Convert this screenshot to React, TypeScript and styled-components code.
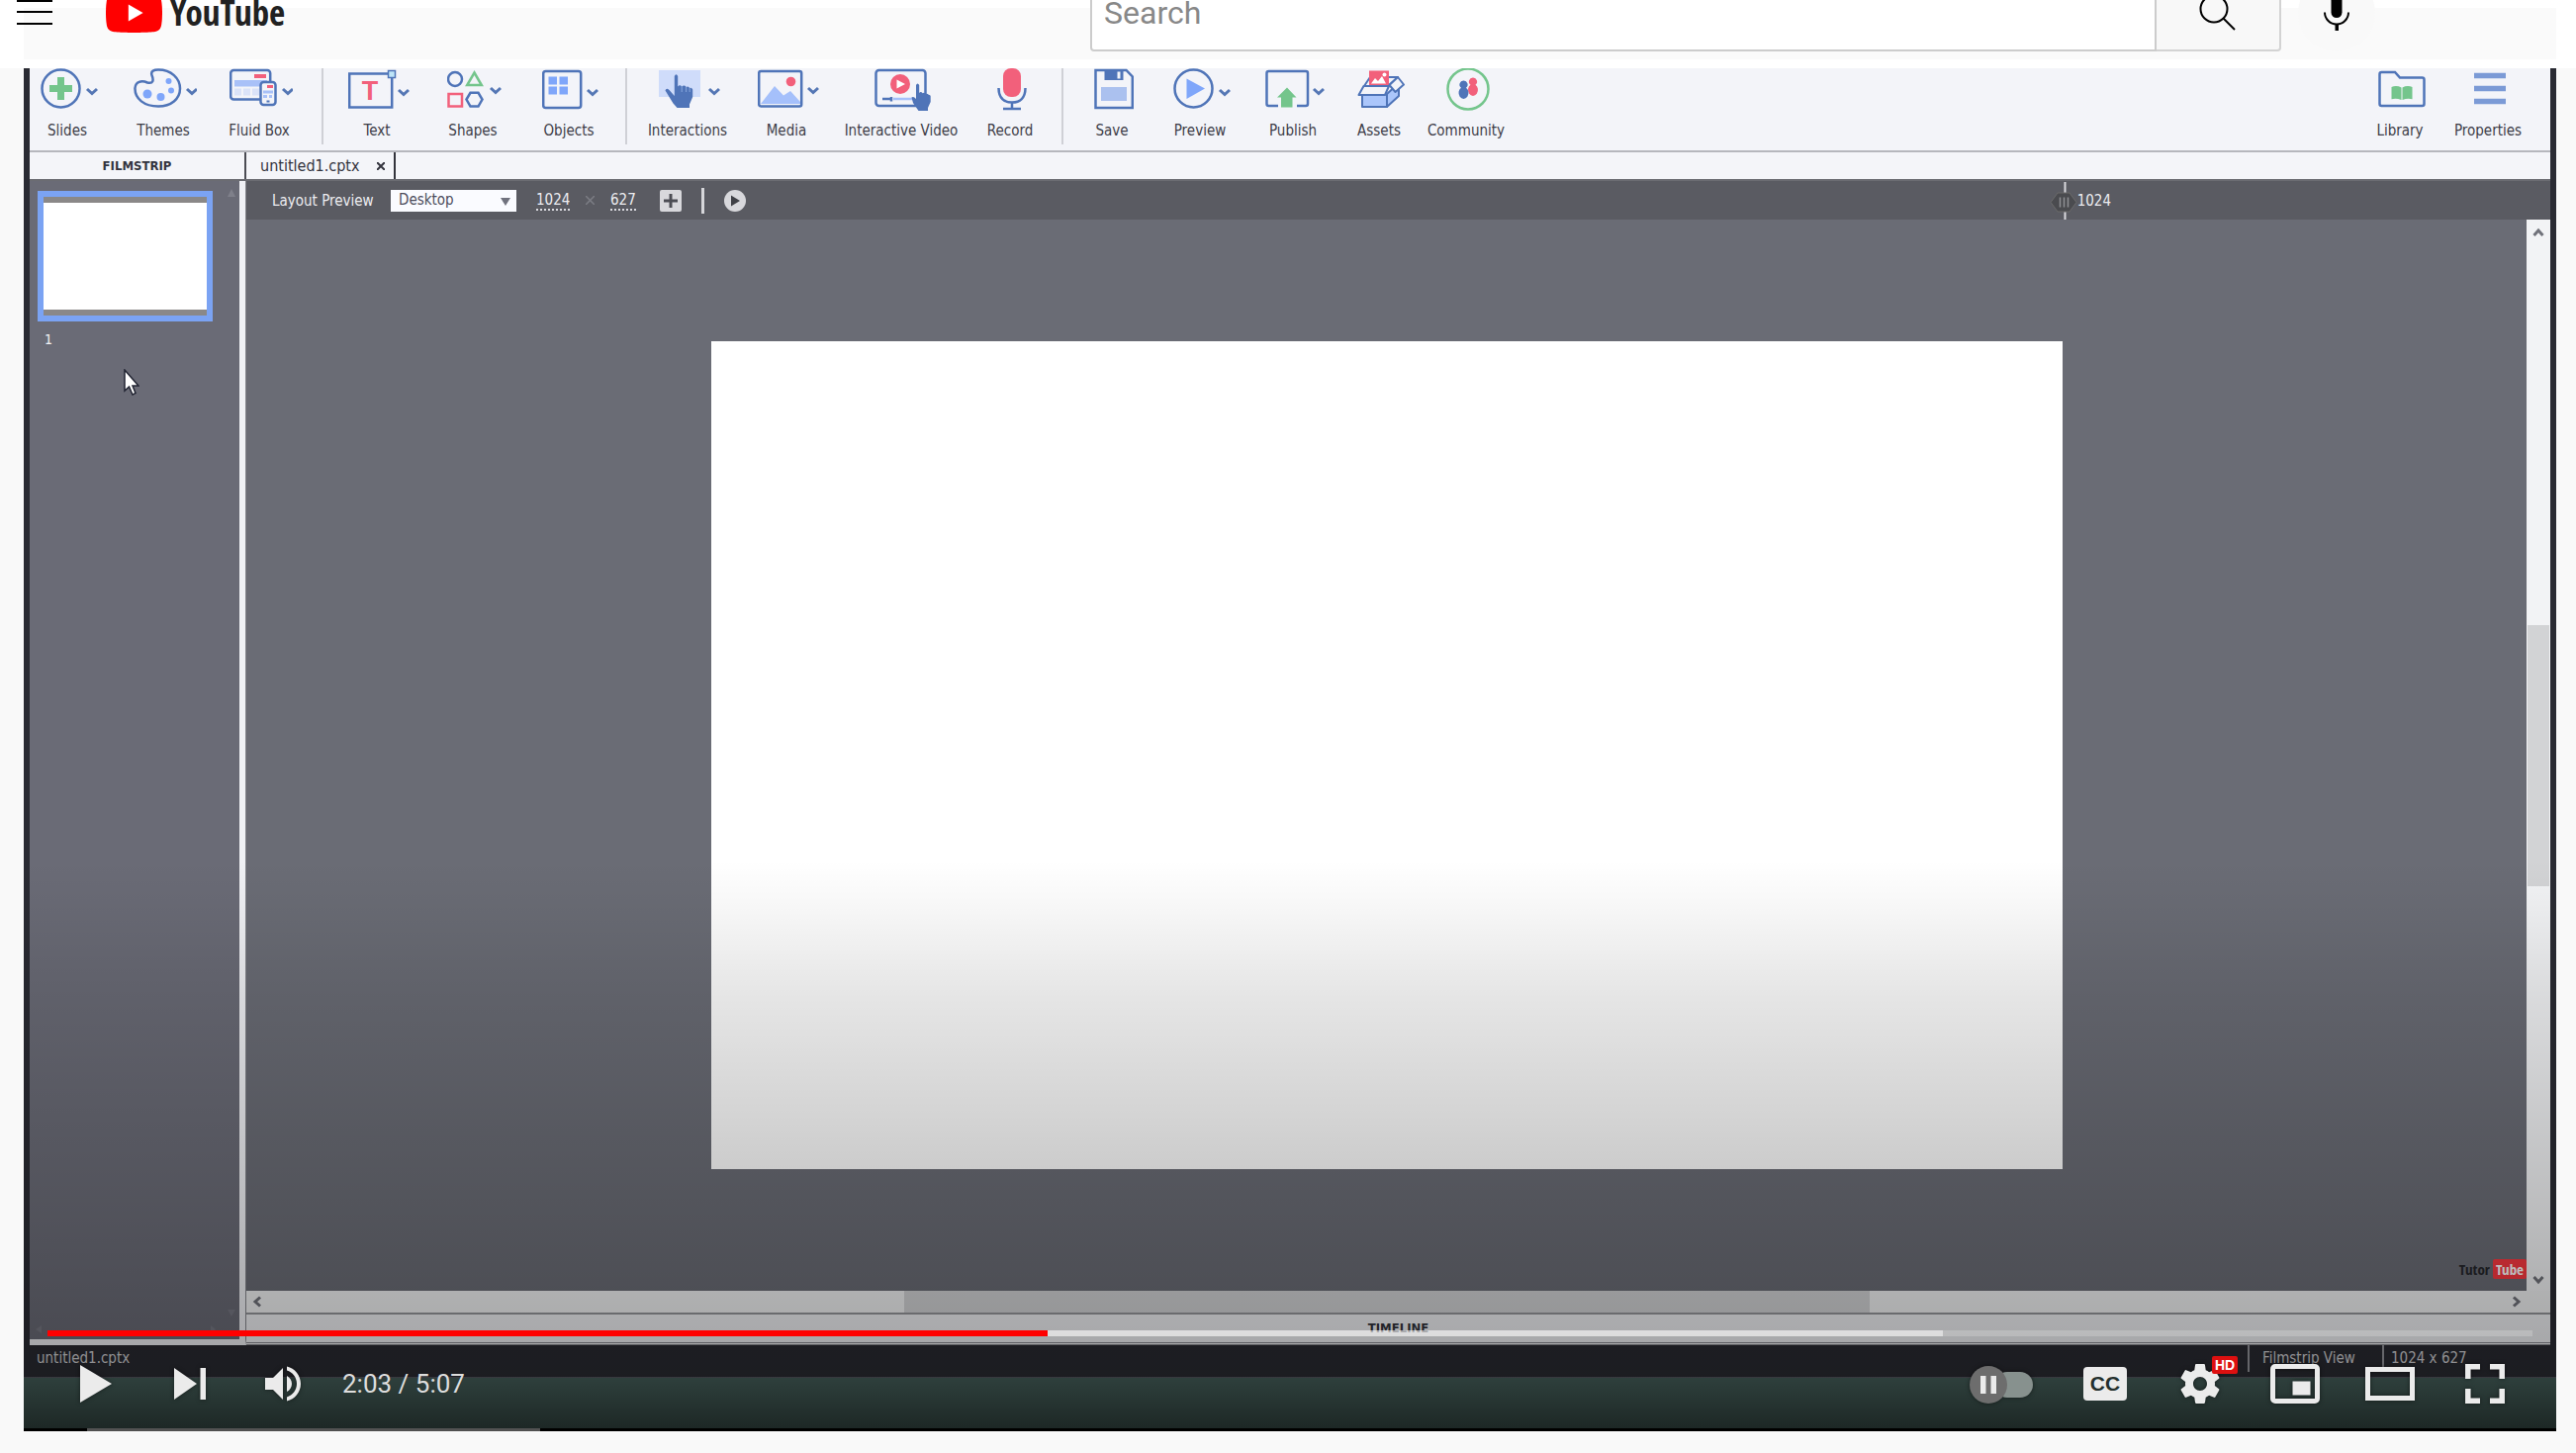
import React from "react";
import styled, { createGlobalStyle } from "styled-components";

const uiFont = `"DejaVu Sans Condensed", "Noto Sans", sans-serif`;
const narrowFont = `"Noto Sans ExtraCondensed", "Open Sans Condensed", "Roboto Condensed", "Liberation Sans Narrow", "Liberation Sans", sans-serif`;
const blue = "#4f74b8";
const sky = "#7fa6fa";
const pink = "#f2607b";
const green = "#74c58c";

const GlobalStyle = createGlobalStyle`
  *, *::before, *::after { box-sizing: border-box; }
  body { margin: 0; background: #f9f9f9; }
  button, input, select { font: inherit; color: inherit; margin: 0; padding: 0; border: 0; background: none; border-radius: 0; }
  svg { display: block; flex: none; }
`;

const Page = styled.div`
  display: flex;
  flex-direction: column;
  min-height: 100vh;
  font-family: Roboto, sans-serif;
`;

/* ---------- site header ---------- */
const Header = styled.header`
  height: 69px;
  overflow: hidden;
  display: flex;
  align-items: flex-end;
  background: linear-gradient(#fafafa, #fafafa) 24px 8px / calc(100% - 44px) 52px no-repeat, #fff;
`;
const HeaderRow = styled.div`
  flex: 1;
  height: 112px;
  display: flex;
  align-items: center;
`;
const HeaderSide = styled.div`
  flex: 1;
  display: flex;
  align-items: center;
  gap: 54px;
  padding-left: 17px;
`;
const PlainButton = styled.button`
  display: block;
  cursor: pointer;
`;
const LogoLink = styled.a`
  display: flex;
  align-items: center;
  gap: 8px;
  color: #212121;
  text-decoration: none;
  font: 700 35px/26px ${narrowFont};
`;
const SearchForm = styled.form`
  flex: none;
  display: flex;
  width: 1204px;
  height: 78px;
  color: #111;
`;
const SearchInput = styled.input`
  flex: 1;
  padding: 0 12px;
  border: 2px solid #ccc;
  border-radius: 4px 0 0 4px;
  background: #fff;
  font-size: 32px;
  &::placeholder { color: #888; opacity: 1; }
`;
const SearchButton = styled.button`
  width: 126px;
  display: grid;
  place-items: center;
  border: 2px solid #d3d3d3;
  border-left: 0;
  border-radius: 0 4px 4px 0;
  background: #f8f8f8;
`;
const MicArea = styled.div`
  width: 298px;
  padding-left: 17px;
`;
const MicButton = styled.button`
  width: 78px;
  height: 78px;
  border-radius: 50%;
  display: grid;
  place-items: center;
  background: #f9f9f9;
`;

/* ---------- video frame ---------- */
const Video = styled.main`
  position: relative;
  flex: 1;
  margin: 0 20px 22px 24px;
  display: flex;
  flex-direction: column;
  background: #2a2b33;
  font: 15px/20px ${uiFont};
`;
const AppWindow = styled.div`
  flex: 1;
  margin: 0 6px;
  display: flex;
  flex-direction: column;
  background: #f3f4f8;
`;
const Toolbar = styled.div`
  height: 85px;
  display: flex;
  background: #f3f4f9;
  border-bottom: 2px solid #b6b7bd;
  color: #3d3d48;
`;
const ToolGroup = styled.div<{ $left: number; $right: number; $line?: boolean }>`
  position: relative;
  height: 77px;
  display: flex;
  gap: 21px;
  padding: 0 ${(p) => p.$right}px 0 ${(p) => p.$left}px;
  border-right: ${(p) => (p.$line ? "2px solid #cfd0d6" : "0")};
`;
const EndGroup = styled(ToolGroup)`
  margin-left: auto;
`;
const Tool = styled.button<{ $w: number }>`
  width: ${(p) => p.$w}px;
  display: flex;
  flex-direction: column;
  align-items: center;
  gap: 9px;
  white-space: nowrap;
  svg { margin-left: 3px; }
`;

const TabRow = styled.div`
  height: 29px;
  display: flex;
  background: #f4f5f9;
  border-bottom: 2px solid #6b6c72;
  color: #33343e;
`;
const PanelTitle = styled.h2`
  width: 219px;
  margin: 0;
  border-right: 2px solid #4b4c54;
  text-align: center;
  font: 700 13px/27px ${uiFont};
`;
const FileTab = styled.div`
  width: 151px;
  display: flex;
  align-items: center;
  justify-content: space-between;
  padding: 0 9px 0 14px;
  border-right: 2px solid #33343c;
  font-size: 16px;
`;

const Body = styled.div`
  flex: 1;
  display: flex;
`;
const FilmColumn = styled.aside`
  width: 219px;
  display: flex;
  border-right: 1px solid #85868c;
  border-bottom: 6px solid #f0f1f5;
`;
const Film = styled.div`
  position: relative;
  flex: 1;
  padding: 10px 8px;
  background: #6a6b76;
  border-right: 6px solid #f0f1f5;
  color: #f2f2f5;
  font-size: 14px;
`;
const FilmHints = styled.svg`
  position: absolute;
  right: 4px;
  bottom: 2px;
`;
const FilmTopHint = styled.svg`
  position: absolute;
  right: 4px;
  top: 8px;
`;
const Thumb = styled.button`
  display: block;
  width: 177px;
  height: 132px;
  border: 6px solid #7ba3f3;
  background: linear-gradient(#8a8888 0 6px, #fff 6px 114px, #8a8888 114px);
`;
const ThumbLabel = styled.div`
  padding: 8px 7px;
`;
const Pointer = styled.svg`
  position: absolute;
  left: 95px;
  top: 190px;
`;

const Main = styled.section`
  flex: 1;
  min-width: 0;
  display: flex;
  flex-direction: column;
`;
const LayoutBar = styled.div`
  height: 39px;
  display: flex;
  align-items: center;
  gap: 20px;
  padding-left: 26px;
  background: #5a5b62;
  color: #ececf0;
`;
const SelectLabel = styled.label`
  width: 100px;
  white-space: nowrap;
`;
const SelectBox = styled.div`
  position: relative;
  width: 127px;
  height: 22px;
  svg { position: absolute; right: 6px; top: 8px; pointer-events: none; }
`;
const Select = styled.select`
  appearance: none;
  display: block;
  width: 100%;
  height: 22px;
  padding: 0 8px 2px;
  background: #fafbff;
  color: #4c4d5c;
  line-height: 20px;
`;
const Dims = styled.div`
  display: flex;
  align-items: center;
  gap: 16px;
  padding-right: 4px;
  color: #85868c;
`;
const DimInput = styled.input<{ $w: number }>`
  width: ${(p) => p.$w}px;
  height: 20px;
  color: #ececf0;
  border-bottom: 2px dotted #d9d9de;
`;
const BarLine = styled.span`
  width: 3px;
  height: 26px;
  background: #d6d6da;
`;
const RulerMark = styled.div`
  margin-left: auto;
  margin-right: 444px;
  display: flex;
  align-items: center;
`;

const StageRow = styled.div`
  flex: 1;
  display: flex;
`;
const Stage = styled.div`
  position: relative;
  flex: 1;
  display: grid;
  place-items: center;
  background: #6a6c75;
`;
const Slide = styled.div`
  width: 1366px;
  max-width: 80%;
  aspect-ratio: 1024 / 627;
  background: #fff;
`;
const Watermark = styled.div`
  position: absolute;
  right: 0;
  bottom: 12px;
  display: flex;
  gap: 3px;
  color: #24252a;
  font: 700 15px/20px ${narrowFont};
  b { padding: 0 3px; border-radius: 2px; background: #f83840; color: #fff; }
`;
const VScroll = styled.div`
  width: 24px;
  display: flex;
  flex-direction: column;
  align-items: center;
  padding: 6px 1px 4px;
  background: #f2f3f5;
`;
const HScroll = styled.div`
  height: 24px;
  display: flex;
  align-items: center;
  padding: 0 27px 0 4px;
  background: #f1f2f3;
  border-bottom: 2px solid #94959a;
`;
const Space = styled.span<{ $grow: number }>`
  flex: ${(p) => p.$grow} 1 0;
`;
const Grip = styled(Space)`
  align-self: stretch;
  background: #d2d3d5;
`;
const Timeline = styled.h2`
  height: 31px;
  margin: 0;
  background: #f0f1f4;
  border-bottom: 3px double #85868c;
  text-align: center;
  color: #30313a;
  font: 700 13px/28px ${uiFont};
`;

const Status = styled.footer`
  height: 32px;
  display: flex;
  padding-left: 7px;
  background: #292a31;
  color: #cfcfd3;
  line-height: 26px;
`;
const StatusCell = styled.span<{ $w: number; $pad: number }>`
  width: ${(p) => p.$w}px;
  height: 27px;
  padding-left: ${(p) => p.$pad}px;
  border-left: 2px solid #94959b;
  white-space: nowrap;
`;
const StatusName = styled.span`
  flex: 1;
`;
const Desk = styled.div`
  height: 55px;
  background: #46605b;
  border-top: 1px solid #55555e;
  display: flex;
  align-items: flex-end;
`;
const DeskEdge = styled.div`
  flex: 1;
  height: 3px;
  padding-left: 64px;
  background: #000;
  span { display: block; width: 458px; height: 3px; background: #c9c9c9; }
`;

/* ---------- player chrome ---------- */
const Shade = styled.div`
  position: absolute;
  inset: auto 0 0;
  height: 577px;
  pointer-events: none;
  background: linear-gradient(transparent, rgba(0, 0, 0, 0.03) 8%, rgba(0, 0, 0, 0.1) 24%, rgba(0, 0, 0, 0.2) 54%, rgba(0, 0, 0, 0.27) 75%, rgba(0, 0, 0, 0.32) 90%, rgba(0, 0, 0, 0.6) 100%);
`;
const Chrome = styled.div`
  position: absolute;
  inset: auto 24px 0;
  color: #ebebeb;
`;
const Track = styled.div`
  height: 6px;
  background: rgba(255, 255, 255, 0.2);
`;
const Loaded = styled.div`
  height: 6px;
  background: rgba(255, 255, 255, 0.5);
`;
const Played = styled.div`
  height: 6px;
  background: #f00;
`;
const Controls = styled.div`
  height: 96px;
  display: flex;
  align-items: center;
`;
const Control = styled.button`
  position: relative;
  width: 96px;
  height: 96px;
  display: grid;
  place-items: center;
  svg { filter: drop-shadow(0 0 2px rgba(0, 0, 0, 0.5)); }
`;
const Time = styled.div`
  flex: 1;
  padding-left: 10px;
  color: #ddd;
  font: 26px/32px Roboto, sans-serif;
`;
const Captions = styled.span`
  width: 44px;
  height: 34px;
  border-radius: 4px;
  background: #ebebeb;
  color: #24302e;
  font: 700 21px/34px "Liberation Sans", sans-serif;
`;
const Hd = styled.span`
  position: absolute;
  left: 60px;
  top: 20px;
  width: 26px;
  height: 18px;
  border-radius: 2px;
  background: #dd1010;
  color: #fff;
  font: 700 14px/18px "Liberation Sans", sans-serif;
`;

/* ---------- icons ---------- */
const Chev = ({ x, y = 21 }: { x: number; y?: number }) => (
  <path d={`M${x} ${y}l5 4.500l5-4.500`} stroke="#5577b5" strokeWidth="3" />
);
const Ico = ({ w, children }: { w: number; children: React.ReactNode }) => (
  <svg width={w} height="44" viewBox={`0 0 ${w} 44`} fill="none" stroke={blue} strokeWidth="2.5" aria-hidden="true">
    {children}
  </svg>
);
const Arrow = ({ d }: { d: string }) => (
  <svg width="14" height="14" viewBox="0 0 14 14" fill="none" stroke="#70727a" strokeWidth="3"><path d={d} /></svg>
);

const icons: Record<string, React.ReactNode> = {
  Slides: <Ico w={58}><circle cx="20.5" cy="20.5" r="19" /><path d="M20.500 9v23M9 20.500h23" stroke={green} strokeWidth="7" /><Chev x={47} /></Ico>,
  Themes: <Ico w={64}><path d="M1.500 20C2 13.500 8 12 14 14.500C20 16 20.500 12 18.500 7C17 2.500 21 1.500 25 1.500C38 1.500 47 10 47 20.500C47 31 38 38.500 25 38.500C11 38.500 1 31 1.500 20Z" /><g fill={sky} stroke="none"><circle cx="14" cy="26" r="4.500" /><circle cx="27.500" cy="29" r="4" /><circle cx="38" cy="22.500" r="3" /><circle cx="35.500" cy="13" r="3" /></g><Chev x={54} /></Ico>,
  "Fluid Box": <Ico w={64}><rect x="1.200" y="2" width="40" height="29.500" rx="3" /><g stroke="none"><rect x="25" y="6" width="12" height="4" fill={pink} /><rect x="5" y="12" width="33" height="6.500" fill="#a9c1f8" /><path d="M5 20.500h7v7H5zM14 20.500h7v7h-7zM23 20.500h7v7h-7z" fill="#dbe3f8" /></g><rect x="31.500" y="14" width="15" height="23" rx="3" fill="#f3f4f9" /><path d="M38 18.500h6" stroke={pink} strokeWidth="3" /><path d="M34 24h10M34 28.500h4M40 28.500h3" stroke="#a9c1f8" strokeWidth="3" /><path d="M37.500 33.500h3" strokeWidth="2" /><Chev x={54} /></Ico>,
  Text: <Ico w={56}><rect x="-1.800" y="5.500" width="0" height="0" stroke="none" /><rect x="1.200" y="5.500" width="43" height="34" /><rect x="40.500" y="2.500" width="7" height="7" fill="#bfe6f8" strokeWidth="1.500" /><text x="22" y="32" textAnchor="middle" fontFamily="Liberation Sans" fontWeight="700" fontSize="27" fill={pink} stroke="none">T</text></Ico>,
  Shapes: <Ico w={55}><circle cx="8" cy="11" r="7" /><path d="M27.500 4.500L34.800 17H20.200Z" stroke={green} /><rect x="1.500" y="26" width="13.500" height="12.500" stroke={pink} /><path d="M19.500 31.500L23.500 24.800H31.500L35.500 31.500L31.500 38.500H23.500Z" /><Chev x={44} y={20} /></Ico>,
  Objects: <Ico w={57}><rect x="1.200" y="3" width="38" height="37" rx="2.500" /><path d="M6.500 8.500h8.500v8h-8.500zM17.500 8.500h8.500v8h-8.500zM6.500 18.500h8.500v8h-8.500zM17.500 18.500h8.500v8h-8.500z" fill={sky} stroke="none" /><Chev x={46} y={22} /></Ico>,
  Interactions: <Ico w={62}><path d="M0 2h42v27H0z" fill="#cfdcfa" stroke="none" /><path d="M15.800 8q1.700-3.500 3.400 0V18.500q2-2.500 4 0q2.500-2 4.500 .5q2-1.500 3.500 1q2-1 3 1.500V29L31 36.500V40H18.500L14.500 35.500L6.500 22.500q1-3 4-.5l5.300 6Z" fill={blue} stroke="none" /><path d="M23.200 18v6M27.600 19v5M31.200 20v4" stroke="#86a5dc" strokeWidth="1" /><Chev x={51} /></Ico>,
  Media: <Ico w={62}><path d="M3 36L17 18L26 27.500L33 23L43 34V36Z" fill="#a5c0fb" stroke="none" /><rect x="1.200" y="3" width="43" height="35.500" rx="2" /><circle cx="33.500" cy="13.500" r="4.800" fill={pink} stroke="none" /><Chev x={51} y={20} /></Ico>,
  "Interactive Video": <Ico w={57}><rect x="1.500" y="2" width="50" height="36" rx="3" /><circle cx="26" cy="16" r="10" fill={pink} stroke="none" /><path d="M22.500 11.500L31 16L22.500 20.500Z" fill="#fff" stroke="none" /><path d="M8 31h10M17 29v4.500" /><path d="M19 31h21" stroke="#a5c0fb" /><path d="M42 17q1.500-3 3.200 0V25q1.500-2 3.500 .3q1.500-1.300 3 .7q2-.5 3 .8q2 0 2 1.500V34L54 40V43H44.500L39 35L37.500 29.500q2-1.500 4.500 1.500Z" fill={blue} stroke="none" /></Ico>,
  Record: <Ico w={30}><rect x="6" y="0" width="18" height="29" rx="8" fill={pink} stroke="none" /><path d="M1.500 20C1.500 30 7 34.500 15 34.500S28.500 30 28.500 20M15 34.500V41M6 41h18" /></Ico>,
  Save: <Ico w={40}><path d="M1.500 2H32.500L38.800 8.500V40H1.500Z" /><path d="M10.500 2h19v10h-19z" fill={blue} stroke="none" /><path d="M23.500 3.500h3v7h-3z" fill="#f3f4f9" stroke="none" /><path d="M7 19h26v14H7z" fill="#abc1ef" stroke="none" /></Ico>,
  Preview: <Ico w={58}><circle cx="20.500" cy="20.500" r="19" /><path d="M13.500 10.500L32 20.500L13.500 31Z" fill={sky} stroke="none" /><Chev x={47} y={22} /></Ico>,
  Publish: <Ico w={60}><path d="M13 38H3.500Q1.500 38 1.500 36V5Q1.500 3 3.500 3H41Q43 3 43 5V36Q43 38 41 38H32" /><path d="M22 19.500L31.500 29.500H27.500V39.500H16V29.500H12Z" fill={green} stroke="none" /><Chev x={49} /></Ico>,
  Assets: <Ico w={48}><g strokeWidth="2" strokeLinejoin="round"><path d="M7 18L13 9H41L31 18" /><path d="M5 26V39H30V26" fill="#abc6fb" /><path d="M30 39L42 28V15L30 26Z" fill="#abc6fb" /><path d="M12 2.500H32V17H12Z" fill={pink} stroke="none" /><path d="M14 15.500L18 10L21 13L25 8L29 15.500Z" fill="#fff" stroke="none" /><circle cx="27.500" cy="6.500" r="2" fill="#fff" stroke="none" /><path d="M6.500 18H32L28 27H1.500Z" fill="#f3f4f9" /><path d="M41 9L47 16.500L38.500 24L32.500 17Z" fill="#f3f4f9" /></g></Ico>,
  Community: <Ico w={44}><circle cx="22" cy="21" r="20.500" stroke={green} /><g stroke="none"><path d="M27 9.500a4 4 0 0 1 2.500 7.200a5 6 0 1 1-5 0A4 4 0 0 1 27 9.500Z" fill={pink} /><path d="M17.500 12.500a4 4 0 0 1 2.500 7.200a5 6 0 1 1-5 0A4 4 0 0 1 17.500 12.500Z" fill={blue} /></g></Ico>,
  Library: <Ico w={48}><path d="M1.500 6Q1.500 4 3.500 4H17L22 9.500H44.500Q46.500 9.500 46.500 11.500V36Q46.500 38 44.500 38H3.500Q1.500 38 1.500 36Z" /><path d="M13.500 19q5-2 10 .5V32q-5-2-10-.8ZM24.500 19.500q5-2.500 10-.5V31.200q-5-1.200-10 .8Z" fill={green} stroke="none" /></Ico>,
  Properties: <Ico w={32}><path d="M0 7.500h32M0 20.500h32M0 33.500h32" stroke="#7b9ad6" strokeWidth="5.500" /></Ico>,
};
icons.Text = (
  <Ico w={62}>
    <rect x="1.200" y="5.500" width="43" height="34" />
    <rect x="40.500" y="2.500" width="7" height="7" fill="#bfe6f8" strokeWidth="1.500" />
    <text x="22" y="32" textAnchor="middle" fontFamily="Liberation Sans" fontWeight="700" fontSize="27" fill={pink} stroke="none">T</text>
    <Chev x={51} y={22} />
  </Ico>
);

const groups: { left: number; right: number; tools: [string, number][] }[] = [
  { left: 0, right: 25, tools: [["Slides", 76], ["Themes", 76], ["Fluid Box", 76]] },
  { left: 16, right: 19, tools: [["Text", 76], ["Shapes", 76], ["Objects", 76]] },
  { left: 21, right: 19, tools: [["Interactions", 80], ["Media", 78], ["Interactive Video", 112], ["Record", 66]] },
  { left: 15, right: 0, tools: [["Save", 68], ["Preview", 68], ["Publish", 78], ["Assets", 54], ["Community", 80]] },
];

const ToolButton = ({ name, w }: { name: string; w: number }) => (
  <Tool type="button" $w={w}>{icons[name]}<span>{name}</span></Tool>
);

const current = 123;
const duration = 307;

export default function App() {
  const loadedPct = 76.27;
  const playedPct = (1011 / 1916) * 100;
  const clock = (s: number) => `${Math.floor(s / 60)}:${String(s % 60).padStart(2, "0")}`;
  return (
    <Page>
      <GlobalStyle />
      <Header>
        <HeaderRow>
          <HeaderSide>
            <PlainButton type="button" aria-label="Guide">
              <svg width="36" height="28" viewBox="0 0 36 28" stroke="#000" strokeWidth="2"><path d="M0 2h36M0 13h36M0 25h36" /></svg>
            </PlainButton>
            <LogoLink href="#">
              <svg width="57" height="40" viewBox="0 0 57 40"><path d="M55.800 6.200A7.200 7.200 0 0 0 50.800 1.200C46.300 0 28.500 0 28.500 0S10.700 0 6.200 1.200A7.200 7.200 0 0 0 1.200 6.200C0 10.700 0 20 0 20s0 9.300 1.200 13.800a7.200 7.200 0 0 0 5 5C10.700 40 28.500 40 28.500 40s17.800 0 22.300-1.200a7.200 7.200 0 0 0 5-5C57 29.300 57 20 57 20s0-9.300-1.200-13.800Z" fill="#f00" /><path d="M22.800 28.500L37.600 20L22.800 11.500Z" fill="#fff" /></svg>
              YouTube
            </LogoLink>
          </HeaderSide>
          <SearchForm onSubmit={(e) => e.preventDefault()}>
            <SearchInput type="text" placeholder="Search" aria-label="Search" />
            <SearchButton type="submit" aria-label="Submit search">
              <svg width="40" height="40" viewBox="0 0 40 40" fill="none" stroke="#000" strokeWidth="2"><circle cx="16" cy="16" r="13.500" /><path d="M25.500 25.500L37 37" /></svg>
            </SearchButton>
          </SearchForm>
          <MicArea>
            <MicButton type="button" aria-label="Search with your voice">
              <svg width="28" height="36" viewBox="0 0 28 36"><rect x="8.500" y="0" width="11" height="23" rx="5.500" /><path d="M2 17.500a12 12 0 0 0 24 0" fill="none" stroke="#000" strokeWidth="2" /><path d="M12.500 29h3.500v7h-3.500z" /></svg>
            </MicButton>
          </MicArea>
        </HeaderRow>
      </Header>

      <Video>
        <AppWindow>
          <Toolbar>
            {groups.map((g, i) => (
              <ToolGroup key={i} $left={g.left} $right={g.right} $line={i < 3}>
                {g.tools.map(([name, w]) => <ToolButton key={name} name={name} w={w} />)}
              </ToolGroup>
            ))}
            <EndGroup $left={0} $right={29}>
              <ToolButton name="Library" w={68} />
              <ToolButton name="Properties" w={68} />
            </EndGroup>
          </Toolbar>
          <TabRow>
            <PanelTitle>FILMSTRIP</PanelTitle>
            <FileTab>
              untitled1.cptx
              <PlainButton type="button" aria-label="Close tab">
                <svg width="8" height="8" viewBox="0 0 8 8" stroke="#33343e" strokeWidth="2"><path d="M0 0l8 8M8 0l-8 8" /></svg>
              </PlainButton>
            </FileTab>
          </TabRow>
          <Body>
            <FilmColumn>
              <Film>
                <Thumb type="button" aria-label="Slide 1" />
                <ThumbLabel>1</ThumbLabel>
                <FilmTopHint width="8" height="8" viewBox="0 0 8 8" fill="#7f808a"><path d="M4 0L8 8H0Z" /></FilmTopHint>
                <FilmHints width="202" height="28" viewBox="0 0 202 28" fill="#777883"><path d="M194 0h8l-4 7ZM6 16v8L0 20ZM177 16v8l5-4Z" /></FilmHints>
                <Pointer width="16" height="28" viewBox="0 0 16 28"><path d="M1 1V22L5.500 18L9 26L12 24.500L9 17H15Z" fill="#fff" stroke="#222533" strokeWidth="1.500" /></Pointer>
              </Film>
            </FilmColumn>
            <Main>
              <LayoutBar>
                <SelectLabel htmlFor="layout">Layout Preview</SelectLabel>
                <SelectBox>
                  <Select id="layout" defaultValue="Desktop"><option>Desktop</option></Select>
                  <svg width="10" height="8" viewBox="0 0 10 8" fill="#70727e"><path d="M0 0h10L5 8Z" /></svg>
                </SelectBox>
                <Dims>
                  <DimInput $w={34} aria-label="Width" defaultValue="1024" />
                  <svg width="9" height="9" viewBox="0 0 9 9" stroke="#7c7d84" strokeWidth="1.500"><path d="M0 0l9 9M9 0l-9 9" /></svg>
                  <DimInput $w={26} aria-label="Height" defaultValue="627" />
                </Dims>
                <PlainButton type="button" aria-label="Add">
                  <svg width="22" height="22" viewBox="0 0 22 22"><rect width="22" height="22" rx="2" fill="#d8d8dc" /><path d="M11 4v14M4 11h14" stroke="#4c4d54" strokeWidth="3" /></svg>
                </PlainButton>
                <BarLine />
                <PlainButton type="button" aria-label="Play preview">
                  <svg width="22" height="22" viewBox="0 0 22 22"><circle cx="11" cy="11" r="11" fill="#d8d8dc" /><path d="M7 5.500L16 11L7 16.500Z" fill="#3f4046" /></svg>
                </PlainButton>
                <RulerMark>
                  <svg width="28" height="39" viewBox="0 0 28 39"><path d="M15.500 1v38" stroke="#dadade" strokeWidth="2" /><path d="M1 21.500L8 12H20L27 21.500L20 31H8Z" fill="#4a4b4f" stroke="#6b6b6b" /><path d="M10.500 16.500v10M14.500 16.500v10M18.500 16.500v10" stroke="#8f9094" strokeWidth="1.500" /></svg>
                  <span>1024</span>
                </RulerMark>
              </LayoutBar>
              <StageRow>
                <Stage>
                  <Slide />
                  <Watermark>Tutor <b>Tube</b></Watermark>
                </Stage>
                <VScroll>
                  <Arrow d="M2.500 10L7 5L11.500 10" />
                  <Space $grow={390} /><Grip $grow={263} /><Space $grow={391} />
                  <Arrow d="M2.500 4L7 9L11.500 4" />
                </VScroll>
              </StageRow>
              <HScroll>
                <Arrow d="M10 2.500L5 7L10 11.500" />
                <Space $grow={646} /><Grip $grow={976} /><Space $grow={646} />
                <Arrow d="M4 2.500L9 7L4 11.500" />
              </HScroll>
              <Timeline>TIMELINE</Timeline>
            </Main>
          </Body>
          <Status>
            <StatusName>untitled1.cptx</StatusName>
            <StatusCell $w={136} $pad={13}>Filmstrip View</StatusCell>
            <StatusCell $w={170} $pad={7}>1024 x 627</StatusCell>
          </Status>
        </AppWindow>
        <Desk><DeskEdge><span /></DeskEdge></Desk>

        <Shade />
        <Chrome>
          <Track>
            <Loaded style={{ width: `${loadedPct}%` }}>
              <Played style={{ width: `${playedPct}%` }} />
            </Loaded>
          </Track>
          <Controls>
            <Control type="button" aria-label="Play"><svg width="96" height="96" fill="#ebebeb"><path d="M33 29L65 48L33 67Z" /></svg></Control>
            <Control type="button" aria-label="Next"><svg width="96" height="96" fill="#ebebeb"><path d="M32 32L55 48L32 64ZM58.500 32H64V64H58.500Z" /></svg></Control>
            <Control type="button" aria-label="Mute"><svg width="96" height="96" fill="#ebebeb"><path transform="translate(12 12) scale(2)" d="M8,21 L12,21 L17,26 L17,10 L12,15 L8,15 Z M19,14 L19,22 C20.480,21.320 21.500,19.770 21.500,18 C21.500,16.260 20.480,14.740 19,14 Z M19,11.290 C21.890,12.150 24,14.830 24,18 C24,21.170 21.890,23.850 19,24.710 L19,26.770 C23.010,25.860 26,22.280 26,18 C26,13.720 23.010,10.140 19,9.230 Z" /></svg></Control>
            <Time>{clock(current)} / {clock(duration)}</Time>
            <Control type="button" aria-label="Autoplay"><svg width="96" height="96"><rect x="32" y="36" width="39" height="26" rx="13" fill="#87918e" /><circle cx="26" cy="49" r="19" fill="#6d6d6d" /><path d="M18 40h5.500v18H18zM28.500 40h5.500v18h-5.500z" fill="#ebebeb" /></svg></Control>
            <Control type="button" aria-label="Subtitles"><Captions>CC</Captions></Control>
            <Control type="button" aria-label="Settings">
              <svg width="96" height="96" fill="#ebebeb"><path transform="translate(3 3) scale(2.5)" d="M23.940,18.780c.030-.250.050-.510.050-.780 0-.270-.020-.520-.050-.780l1.680-1.320c.150-.120.190-.330.090-.510l-1.600-2.760c-.090-.170-.310-.240-.480-.170l-1.990.8c-.410-.320-.860-.580-1.350-.780l-.3-2.120c-.020-.190-.190-.330-.390-.330h-3.200c-.2 0-.360.140-.390.330l-.3 2.120c-.480.2-.930.470-1.350.780l-1.990-.8c-.180-.070-.390 0-.480.170l-1.600 2.760c-.1.170-.050.390.090.510l1.680 1.320c-.030.250-.050.520-.050.780s.020.520.050.780l-1.680 1.320c-.150.120-.190.330-.090.510l1.600 2.760c.090.170.310.240.480.170l1.990-.8c.410.320.860.580 1.350.780l.3 2.120c.020.190.190.330.390.330h3.200c.2 0 .360-.140.390-.330l.3-2.120c.480-.2.930-.470 1.350-.780l1.990.8c.180.070.390 0 .480-.170l1.600-2.760c.090-.170.050-.390-.090-.510zM18 20.800c-1.540 0-2.800-1.250-2.800-2.800s1.250-2.800 2.800-2.800 2.800 1.250 2.800 2.800-1.250 2.800-2.800 2.800z" /></svg>
              <Hd>HD</Hd>
            </Control>
            <Control type="button" aria-label="Miniplayer"><svg width="96" height="96" fill="none" stroke="#ebebeb" strokeWidth="5"><rect x="25.500" y="30.500" width="45" height="35" rx="2.500" /><path d="M45.500 45.500h18v14h-18z" fill="#ebebeb" stroke="none" /></svg></Control>
            <Control type="button" aria-label="Theater mode"><svg width="96" height="96" fill="none" stroke="#ebebeb" strokeWidth="5"><rect x="25.500" y="33.500" width="45" height="29" /></svg></Control>
            <Control type="button" aria-label="Full screen"><svg width="96" height="96" fill="none" stroke="#ebebeb" strokeWidth="5.500"><path d="M30.800 43V30.800H43M53 30.800H65.200V43M65.200 53V65.200H53M43 65.200H30.800V53" /></svg></Control>
          </Controls>
        </Chrome>
      </Video>
    </Page>
  );
}
